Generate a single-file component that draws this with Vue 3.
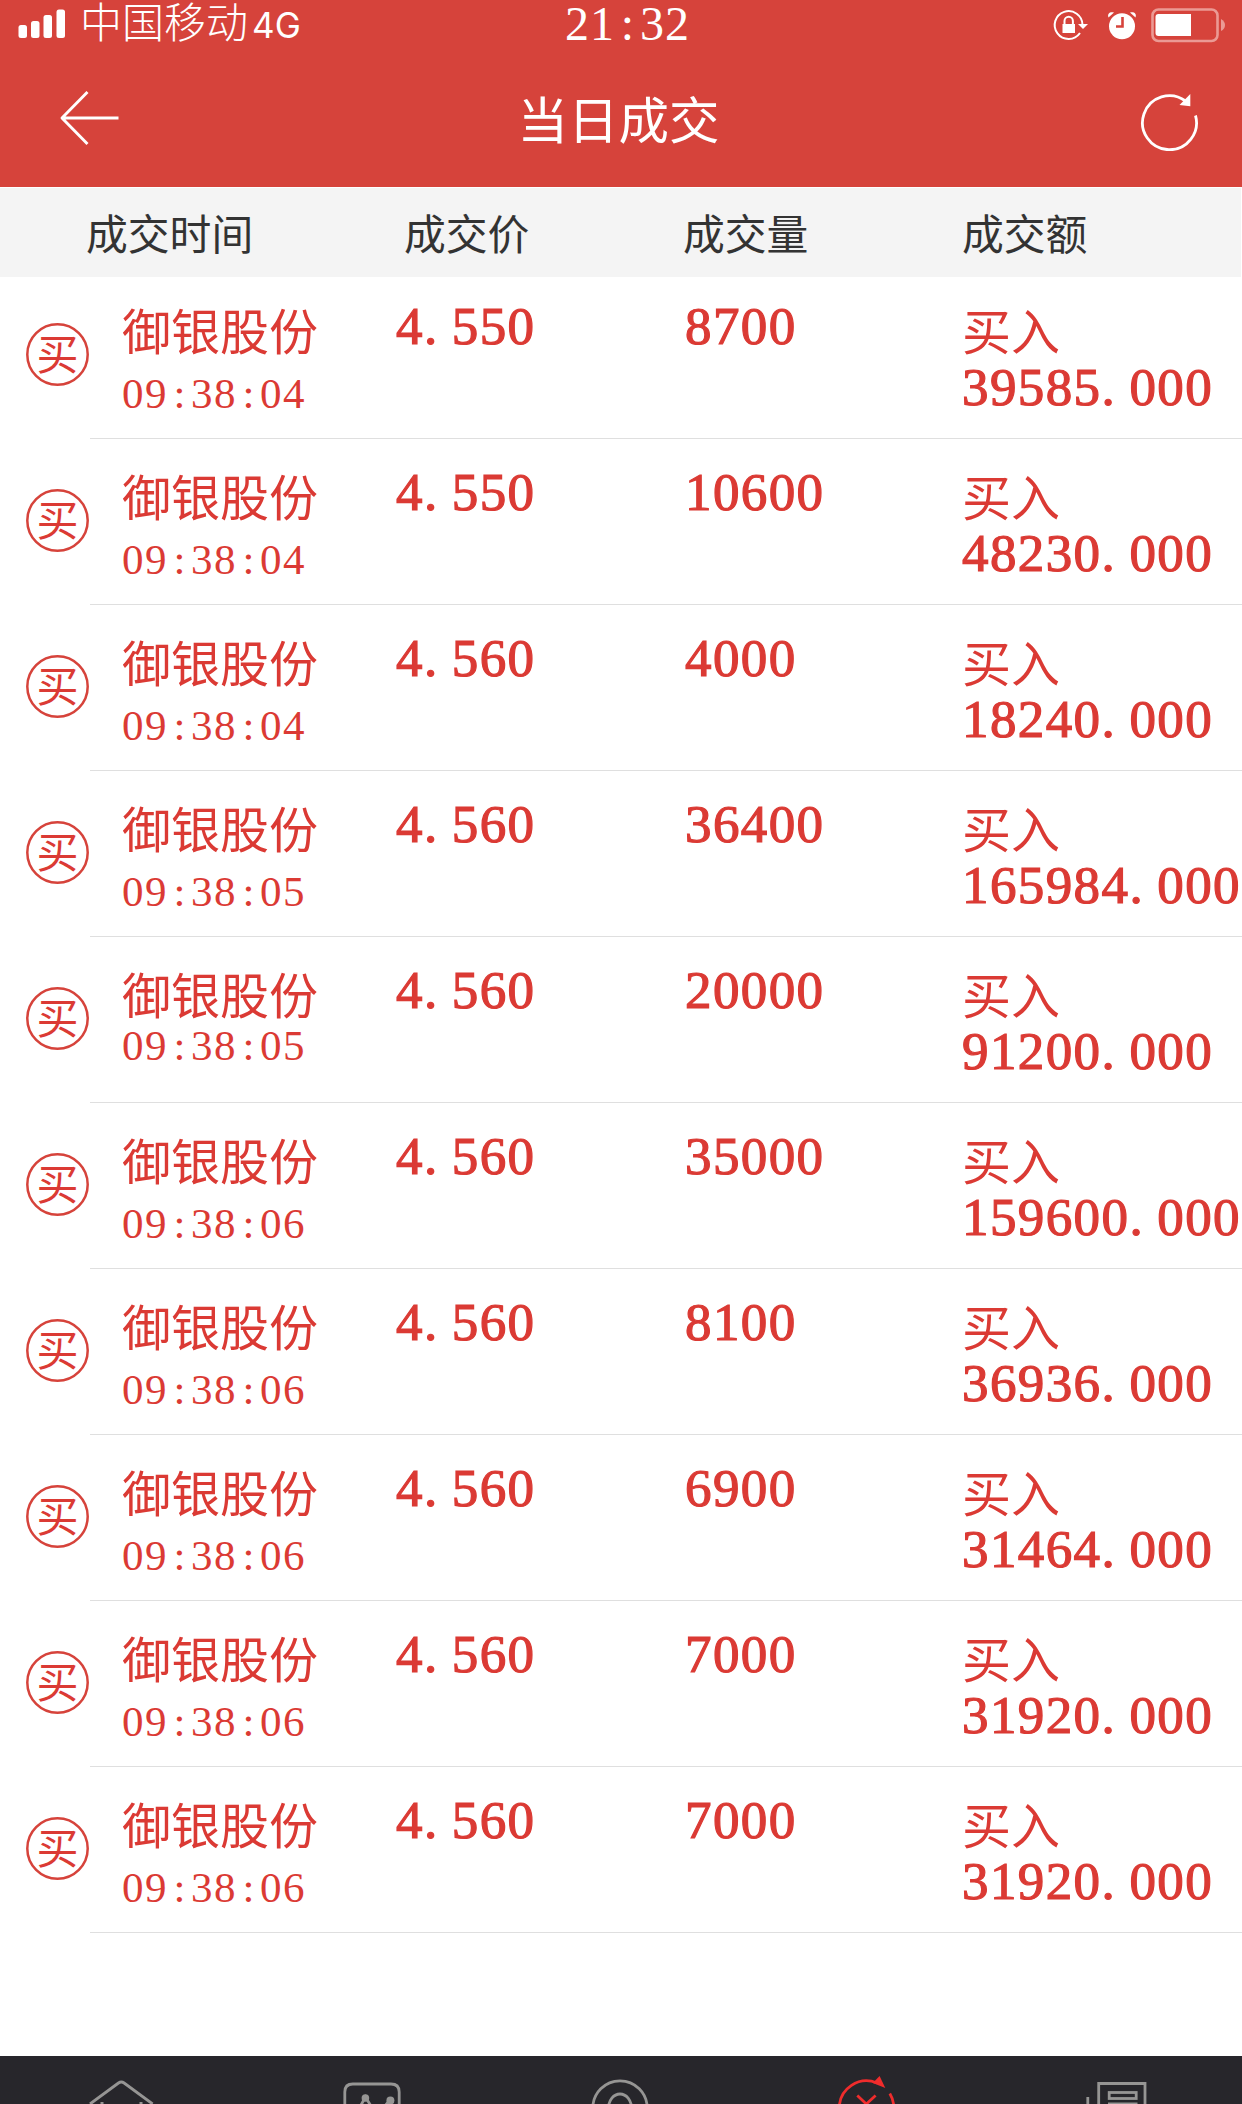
<script setup>
const columns = ['成交时间', '成交价', '成交量', '成交额']

const trades = [
  { time: '09:38:04', price: '4.550', volume: '8700', amount: '39585.000' },
  { time: '09:38:04', price: '4.550', volume: '10600', amount: '48230.000' },
  { time: '09:38:04', price: '4.560', volume: '4000', amount: '18240.000' },
  { time: '09:38:05', price: '4.560', volume: '36400', amount: '165984.000' },
  { time: '09:38:05', price: '4.560', volume: '20000', amount: '91200.000', tight: true },
  { time: '09:38:06', price: '4.560', volume: '35000', amount: '159600.000' },
  { time: '09:38:06', price: '4.560', volume: '8100', amount: '36936.000' },
  { time: '09:38:06', price: '4.560', volume: '6900', amount: '31464.000' },
  { time: '09:38:06', price: '4.560', volume: '7000', amount: '31920.000' },
  { time: '09:38:06', price: '4.560', volume: '7000', amount: '31920.000' },
]

// Separators take a full digit cell, so they are rendered apart from the digits.
const parts = (s) => s.split(/([.:])/)
const sepClass = (p) => (p === '.' ? 'dot' : p === ':' ? 'colon' : '')
</script>

<template>
  <div class="screen">
    <header class="top">
      <div class="status">
        <div class="carrier">
          <svg class="signal" width="50" height="34" viewBox="0 0 50 34" fill="#fff">
            <rect x="0.5" y="20" width="8.5" height="13" rx="2.5" />
            <rect x="13" y="16" width="8.5" height="17" rx="2.5" />
            <rect x="25.5" y="10" width="8.5" height="23" rx="2.5" />
            <rect x="38.5" y="4.500" width="8.500" height="28.500" rx="2.5" />
          </svg>
          <span class="operator">中国移动</span>
          <span class="network">4G</span>
        </div>
        <div class="clock num"><span v-for="(p, i) in parts('21:32')" :key="i" :class="sepClass(p)">{{ p }}</span></div>
        <svg class="indicators" width="190" height="50" viewBox="0 0 190 50">
          <g fill="none" stroke="#fff" stroke-width="2">
            <path d="M42.500 25 A13.900 13.900 0 1 0 40 33" />
            <path d="M24.500 26 V21 a4.200 4.200 0 0 1 8.400 0 V26" />
          </g>
          <rect x="22.500" y="24" width="12.500" height="9" fill="#fff" />
          <path d="M38 24 H48 L43 29 Z" fill="#fff" />
          <circle cx="82" cy="26.200" r="13" fill="#fff" />
          <path d="M82.500 17 V26.500 H76" fill="none" stroke="#d6433b" stroke-width="2.600" />
          <path d="M68.500 17.500 C67 13.500 70 11.500 74 12.500 Z M95.500 17.500 C97 13.500 94 11.500 90 12.500 Z" fill="#fff" />
          <rect x="112.500" y="9.500" width="65" height="31.500" rx="6" fill="none" stroke="#eb9a94" stroke-width="2.600" />
          <path d="M118.500 14 H151 V36 H118.500 Q115.500 36 115.500 33 V17 Q115.500 14 118.500 14Z" fill="#fff" />
          <path d="M181 19 Q185 21.500 185 25 Q185 29 181 31 Z" fill="#eb9a94" />
        </svg>
      </div>
      <div class="navbar">
        <svg class="back" width="62" height="60" viewBox="0 0 62 60" fill="none" stroke="#fff" stroke-width="2.900">
          <path d="M29.500 4 L4 30 L29.500 56 M4 30 H60.500" stroke-linejoin="round" />
        </svg>
        <h1>当日成交</h1>
        <svg class="refresh" width="60" height="62" viewBox="0 0 60 62">
          <path d="M46.500 12 A27 27 0 1 0 56.500 26.500" fill="none" stroke="#fff" stroke-width="2.800" />
          <path d="M51.300 5 V17.200 L40.500 16 Z" fill="#fff" />
        </svg>
      </div>
    </header>

    <div class="thead">
      <div v-for="c in columns" :key="c">{{ c }}</div>
    </div>

    <main class="list">
      <section v-for="(t, n) in trades" :key="n" class="row">
        <div class="side">
          <span class="badge">
            <svg width="63" height="63" viewBox="0 0 63 63"><circle cx="31.500" cy="31.500" r="30.200" /></svg>
            <span>买</span>
          </span>
        </div>
        <div class="cells">
          <div class="stock">
            <div class="name">御银股份</div>
            <div class="time num" :class="{ tight: t.tight }"><span v-for="(p, i) in parts(t.time)" :key="i" :class="sepClass(p)">{{ p }}</span></div>
          </div>
          <div class="value num"><span v-for="(p, i) in parts(t.price)" :key="i" :class="sepClass(p)">{{ p }}</span></div>
          <div class="value num">{{ t.volume }}</div>
          <div class="amount">
            <div class="name">买入</div>
            <div class="total num"><span v-for="(p, i) in parts(t.amount)" :key="i" :class="sepClass(p)">{{ p }}</span></div>
          </div>
        </div>
      </section>
    </main>

    <nav class="tabs">
      <svg viewBox="0 0 120 48">
        <path d="M26 48 L54.500 27 Q57.300 25 60.100 27 L88.600 48" />
        <path d="M36.500 47.500 h3 M75.500 47.500 h3" />
      </svg>
      <svg viewBox="0 0 120 48">
        <path d="M31.800 50 V36 Q31.800 28 39.800 28 H78 Q86.200 28 86.200 36 V50" />
        <path d="M47.500 50 L52.400 41 L58 50 M72 50 L77.400 43" />
        <g class="solid"><circle cx="52.400" cy="42" r="3.800" /><circle cx="77.400" cy="44.500" r="4" /></g>
      </svg>
      <svg viewBox="0 0 120 48">
        <circle cx="59" cy="52" r="27.200" />
        <ellipse cx="59" cy="52" rx="11.500" ry="14" />
      </svg>
      <svg class="active" viewBox="0 0 120 48">
        <path d="M30.300 52 A27.200 27.200 0 0 1 68 27" />
        <path d="M80.800 37.500 A27.200 27.200 0 0 1 84.800 52" />
        <path d="M48.300 39.500 L57.300 48 L66.600 39.500" />
        <path class="solid" d="M70.600 20 L76.300 32 L63.800 27 Z" />
      </svg>
      <svg viewBox="0 0 120 48">
        <path d="M40.700 50 V27.500 H87 V50" />
        <rect x="51.200" y="36.500" width="27" height="6" />
        <path d="M50 48 H79.500 M29.800 41 V50" />
      </svg>
    </nav>
  </div>
</template>

<style>
body {
  margin: 0;
  background: #fff;
}
</style>

<style scoped>
.screen {
  width: 1242px;
  height: 2104px;
  overflow: hidden;
  display: flex;
  flex-direction: column;
  background: #fff;
  font-family: "Noto Sans CJK SC", sans-serif;
}
.num {
  font-family: "Liberation Serif", serif;
  white-space: nowrap;
}
.dot,
.colon {
  display: inline-block;
  width: var(--cell);
  letter-spacing: 0;
}
.colon {
  text-align: center;
}
.top {
  flex: none;
  height: 187px;
  background: #d6433b;
  color: #fff;
}
.status {
  height: 50px;
  display: grid;
  grid-template-columns: 1fr auto 1fr;
}
.carrier {
  display: flex;
  padding-left: 18px;
}
.signal {
  margin-top: 5px;
}
.operator {
  margin-left: 12px;
  font-size: 42px;
  line-height: 40px;
  font-weight: 300;
}
.network {
  margin-left: 4px;
  font-family: Inter, sans-serif;
  font-size: 35px;
  line-height: 50px;
}
.clock {
  --cell: 25px;
  font-size: 48px;
  letter-spacing: 1px;
  line-height: 48px;
  margin-left: 13px;
}
.indicators {
  justify-self: end;
  margin-right: 12px;
}
.navbar {
  height: 137px;
  display: grid;
  grid-template-columns: 1fr auto 1fr;
  padding: 0 43px 0 58px;
}
.back {
  margin-top: 38px;
}
.refresh {
  margin-top: 39px;
  justify-self: end;
}
h1 {
  margin: 0 20px 0 0;
  font-size: 50.500px;
  font-weight: 400;
  line-height: 134px;
}
.thead {
  flex: none;
  box-sizing: border-box;
  width: 1241px;
  height: 90px;
  border-top: 1px solid #fff;
  padding-left: 86px;
  display: grid;
  grid-template-columns: 318px 279px 279px 1fr;
  background: #f4f4f4;
  color: #333;
  font-size: 41.800px;
  line-height: 88px;
  font-weight: 400;
}
.list {
  flex: 1;
  margin-top: -4px;
  color: #db3a34;
}
.row {
  height: 166px;
  display: flex;
}
.side {
  width: 90px;
  flex: none;
}
.badge {
  display: grid;
  place-items: center;
  width: 63px;
  height: 63px;
  margin: 50px 0 0 26px;
  font-size: 42px;
  line-height: 57px;
}
.badge > * {
  grid-area: 1 / 1;
}
.badge span {
  margin-top: -6px;
}
.badge svg {
  fill: none;
  stroke: #d6433b;
  stroke-width: 2.500;
}
.cells {
  flex: 1;
  box-sizing: border-box;
  border-bottom: 1px solid #dfdfdf;
  padding-left: 32px;
  display: grid;
  grid-template-columns: 274px 289px 277px 1fr;
}
.stock,
.amount {
  padding-top: 26px;
}
.name {
  font-size: 49px;
  line-height: 60px;
}
.time {
  --cell: 23px;
  margin-top: 10px;
  font-size: 43px;
  letter-spacing: 1.500px;
  line-height: 50px;
}
.time.tight {
  margin-top: -2px;
}
.value,
.total {
  --cell: 27.900px;
  font-size: 53px;
  letter-spacing: 1.400px;
  line-height: 60px;
  -webkit-text-stroke: 1.200px #db3a34;
}
.value {
  padding-top: 23px;
}
.total {
  margin-top: -2px;
}
.tabs {
  flex: none;
  height: 48px;
  display: flex;
  justify-content: space-around;
  background: #27262b;
}
.tabs svg {
  width: 120px;
  height: 48px;
  fill: none;
  stroke: #969594;
  stroke-width: 2.800;
}
.tabs .solid {
  fill: #969594;
  stroke: none;
}
.tabs .active {
  stroke: #f02c2c;
}
.tabs .active .solid {
  fill: #f02c2c;
}
</style>
